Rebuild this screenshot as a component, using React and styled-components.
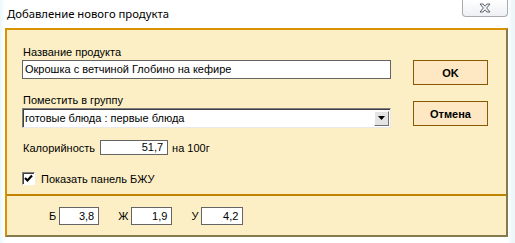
import styled, { createGlobalStyle } from 'styled-components';

const GlobalStyle = createGlobalStyle`
  html, body {
    margin: 0;
    padding: 0;
    background: #ffffff;
  }
  body {
    font-family: "Liberation Sans", Arial, sans-serif;
  }
`;

const App = () => {
  return (
    <Window>
      <GlobalStyle />
      <TitleBar>
        <Title>Добавление нового продукта</Title>
        <CloseButton>
          <svg width="14" height="10" viewBox="0 0 14 10">
            <path
              d="M2 1 L5 1 L7 3.2 L9 1 L12 1 L8.6 5 L12 9 L9 9 L7 6.8 L5 9 L2 9 L5.4 5 Z"
              fill="#f4f6fa"
              stroke="#5b6270"
              strokeWidth="1"
            />
          </svg>
        </CloseButton>
      </TitleBar>
      <Panel>
        <Upper>
          <Fields>
            <Label>Название продукта</Label>
            <TextBox>Окрошка с ветчиной Глобино на кефире</TextBox>
            <Label $top={15}>Поместить в группу</Label>
            <Select>
              <span>готовые блюда : первые блюда</span>
              <DropButton>
                <svg width="7" height="4" viewBox="0 0 7 4">
                  <path d="M0 0 H7 L3.5 4 Z" fill="#000" />
                </svg>
              </DropButton>
            </Select>
            <CalorieRow>
              <span>Калорийность</span>
              <NumBox $width={68} $height={15}>51,7</NumBox>
              <span>на 100г</span>
            </CalorieRow>
            <CheckRow>
              <CheckBox>
                <svg width="9" height="9" viewBox="0 0 9 9">
                  <path d="M1 4 L3.5 6.5 L8 1.5" fill="none" stroke="#000" strokeWidth="2.2" />
                </svg>
              </CheckBox>
              <span>Показать панель БЖУ</span>
            </CheckRow>
          </Fields>
          <Buttons>
            <Button>OK</Button>
            <Button>Отмена</Button>
          </Buttons>
        </Upper>
        <Lower>
          <Nutrient>
            <span>Б</span>
            <NumBox $width={40} $height={18}>3,8</NumBox>
          </Nutrient>
          <Nutrient>
            <span>Ж</span>
            <NumBox $width={41} $height={18}>1,9</NumBox>
          </Nutrient>
          <Nutrient>
            <span>У</span>
            <NumBox $width={42} $height={18}>4,2</NumBox>
          </Nutrient>
        </Lower>
      </Panel>
    </Window>
  );
};

const Window = styled.div`
  width: 515px;
  height: 243px;
  display: flex;
  flex-direction: column;
  background: linear-gradient(90deg, #eaf7fb 0, #ffffff 5px, #ffffff 508px, #eef6fa 512px);
  overflow: hidden;
`;

const TitleBar = styled.div`
  height: 28px;
  display: flex;
  align-items: flex-start;
  justify-content: space-between;
  padding: 0 7px 0 7px;
`;

const Title = styled.div`
  font-family: "Noto Sans", "Open Sans", sans-serif;
  font-size: 11.3px;
  line-height: 14px;
  margin-top: 7px;
  color: #000;
`;

const CloseButton = styled.div`
  width: 44px;
  height: 16px;
  display: flex;
  align-items: center;
  justify-content: center;
  border: 1px solid #a9abb0;
  border-top: none;
  border-radius: 0 0 4px 4px;
  background: linear-gradient(#ffffff, #eef0f3);
`;

const Panel = styled.div`
  flex: none;
  width: 499px;
  height: 205px;
  margin-left: 5px;
  display: flex;
  flex-direction: column;
  background: #fcefc5;
  border: 2px solid #d99200;
  border-right-color: #847a4c;
  border-bottom-color: #847a4c;
`;

const Upper = styled.div`
  height: 164px;
  display: flex;
  padding: 0 0 0 15px;
  border-bottom: 2px solid #c08400;
`;

const Fields = styled.div`
  width: 369px;
  display: flex;
  flex-direction: column;
  font-size: 11px;
  color: #000;
`;

const Label = styled.div`
  margin-top: ${p => p.$top ?? 16}px;
  height: 13px;
  line-height: 13px;
  padding-left: 1px;
`;

const TextBox = styled.div`
  margin-top: 1px;
  height: 17px;
  line-height: 17px;
  padding-left: 2px;
  background: #ffffff;
  border: 1px solid #646464;
  white-space: nowrap;
`;

const Select = styled.div`
  margin-top: 1px;
  height: 16px;
  display: flex;
  align-items: center;
  justify-content: space-between;
  padding: 1px 1px 1px 2px;
  background: #ffffff;
  border: 1px solid;
  border-color: #808080 #e9e9e9 #e9e9e9 #808080;
  box-shadow: inset 1px 1px 0 #404040;
`;

const DropButton = styled.div`
  width: 15px;
  height: 15px;
  display: flex;
  align-items: center;
  justify-content: center;
  background: #e4e4e4;
  border: 1px solid;
  border-color: #ffffff #707070 #707070 #ffffff;
  box-sizing: border-box;
`;

const CalorieRow = styled.div`
  margin-top: 12px;
  display: flex;
  align-items: center;
  gap: 5px;
  height: 15px;
  padding-left: 1px;
  & > span:last-child {
    margin-left: -1px;
  }
`;

const NumBox = styled.div`
  width: ${p => p.$width}px;
  height: ${p => p.$height}px;
  box-sizing: border-box;
  line-height: ${p => p.$height - 2}px;
  text-align: right;
  padding-right: 4px;
  background: #ffffff;
  border: 1px solid #646464;
`;

const CheckRow = styled.div`
  margin-top: 17px;
  display: flex;
  align-items: center;
  gap: 6px;
  height: 13px;
`;

const CheckBox = styled.div`
  width: 13px;
  height: 13px;
  box-sizing: border-box;
  display: flex;
  align-items: center;
  justify-content: center;
  background: #ffffff;
  border: 1px solid;
  border-color: #808080 #ffffff #ffffff #808080;
  box-shadow: inset 1px 1px 0 #404040;
`;

const Buttons = styled.div`
  margin-left: 22px;
  margin-top: 30px;
  display: flex;
  flex-direction: column;
  gap: 16px;
`;

const Button = styled.div`
  width: 73px;
  height: 23px;
  display: flex;
  align-items: center;
  justify-content: center;
  font-size: 11px;
  font-weight: bold;
  color: #000;
  background: #fde8c3;
  border: 1px solid #8a5a00;
`;

const Lower = styled.div`
  flex: 1;
  display: flex;
  align-items: center;
  padding-left: 42px;
  gap: 19px;
  font-size: 11px;
`;

const Nutrient = styled.div`
  display: flex;
  align-items: center;
  gap: 3px;
`;

export default App;
